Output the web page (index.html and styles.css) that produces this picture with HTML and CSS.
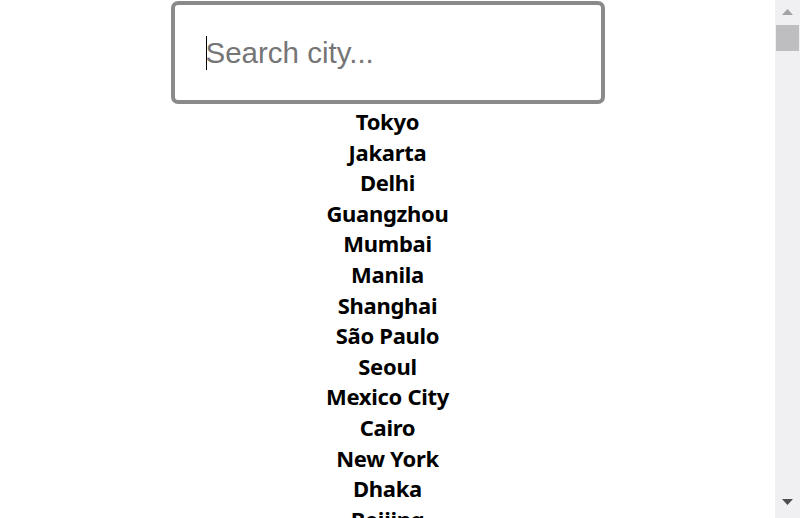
FILE: index.html
```html
<!DOCTYPE html>
<html lang="en">
<head>
<meta charset="utf-8">
<title>City search</title>
<link rel="stylesheet" href="styles.css">
</head>
<body>
<div class="window">
<main class="app">
  <label class="field">
    <input class="search" type="text" placeholder="Search city..." autofocus>
    <span class="caret"></span>
  </label>
  <ul class="cities">
    <li>Tokyo</li><li>Jakarta</li><li>Delhi</li><li>Guangzhou</li><li>Mumbai</li><li>Manila</li><li>Shanghai</li><li>São Paulo</li><li>Seoul</li><li>Mexico City</li><li>Cairo</li><li>New York</li><li>Dhaka</li><li>Beijing</li><li>Kolkata</li><li>Bangkok</li><li>Shenzhen</li><li>Moscow</li><li>Buenos Aires</li><li>Lagos</li><li>Istanbul</li><li>Karachi</li><li>Bangalore</li><li>Ho Chi Minh City</li><li>Osaka</li><li>Chengdu</li><li>Tehran</li><li>Kinshasa</li><li>Rio de Janeiro</li><li>Chennai</li><li>Xi'an</li><li>Lahore</li><li>Chongqing</li><li>Los Angeles</li><li>Baoding</li><li>London</li><li>Paris</li><li>Linyi</li><li>Dongguan</li><li>Hyderabad</li><li>Tianjin</li><li>Lima</li><li>Wuhan</li><li>Nanyang</li><li>Hangzhou</li><li>Foshan</li><li>Nagoya</li><li>Taipei</li><li>Tongshan</li><li>Luanda</li><li>Zhoukou</li><li>Ganzhou</li><li>Kuala Lumpur</li><li>Heze</li><li>Quanzhou</li><li>Chicago</li><li>Nanjing</li><li>Jining</li><li>Hanoi</li><li>Pune</li><li>Fuyang</li><li>Ahmedabad</li><li>Johannesburg</li><li>Bogotá</li><li>Dar es Salaam</li><li>Shenyang</li><li>Khartoum</li><li>Shangqiu</li><li>Cangzhou</li><li>Hong Kong</li><li>Shaoyang</li><li>Zhanjiang</li><li>Yancheng</li><li>Hengyang</li><li>Riyadh</li><li>Zhumadian</li><li>Santiago</li><li>Xingtai</li><li>Chattogram</li><li>Bijie</li><li>Shangrao</li><li>Zunyi</li><li>Surat</li><li>Surabaya</li><li>Huanggang</li><li>Maoming</li><li>Nanchong</li><li>Xinyang</li><li>Madrid</li><li>Baghdad</li><li>Qujing</li><li>Jieyang</li><li>Singapore</li><li>Prayagraj</li><li>Liaocheng</li><li>Dalian</li><li>Yulin</li><li>Changde</li><li>Qingdao</li><li>Douala</li><li>Miami</li><li>Nangandao</li><li>Pyongyang</li><li>Ankara</li><li>Toronto</li><li>Abidjan</li><li>Alexandria</li><li>Yangon</li><li>Saint Petersburg</li><li>Kano</li><li>Houston</li><li>Dallas</li><li>Philadelphia</li><li>Atlanta</li><li>Washington</li><li>Barcelona</li><li>Sydney</li><li>Melbourne</li><li>Guadalajara</li><li>Monterrey</li><li>Belo Horizonte</li><li>Casablanca</li><li>Nairobi</li><li>Addis Ababa</li><li>Accra</li><li>Kabul</li><li>Jeddah</li><li>Busan</li><li>Berlin</li><li>Rome</li><li>Milan</li><li>Athens</li><li>Lisbon</li><li>Kyiv</li><li>Warsaw</li><li>Vienna</li><li>Budapest</li><li>Bucharest</li><li>Hamburg</li><li>Munich</li><li>Prague</li><li>Brussels</li><li>Amsterdam</li><li>Stockholm</li><li>Copenhagen</li><li>Oslo</li><li>Helsinki</li><li>Dublin</li><li>Manchester</li><li>Birmingham</li><li>Glasgow</li><li>Lyon</li><li>Marseille</li><li>Naples</li><li>Turin</li><li>Valencia</li><li>Seville</li><li>Porto</li><li>Zurich</li><li>Geneva</li><li>Minsk</li><li>Belgrade</li><li>Sofia</li><li>Zagreb</li><li>Riga</li><li>Vilnius</li><li>Tallinn</li><li>Tbilisi</li><li>Baku</li><li>Yerevan</li><li>Tashkent</li><li>Almaty</li><li>Bishkek</li><li>Dushanbe</li><li>Ashgabat</li><li>Islamabad</li><li>Faisalabad</li><li>Rawalpindi</li><li>Multan</li><li>Peshawar</li><li>Jaipur</li><li>Lucknow</li><li>Kanpur</li><li>Nagpur</li><li>Indore</li><li>Bhopal</li><li>Patna</li><li>Vadodara</li><li>Ludhiana</li><li>Agra</li><li>Nashik</li><li>Varanasi</li><li>Colombo</li><li>Kathmandu</li><li>Thimphu</li><li>Mandalay</li><li>Phnom Penh</li><li>Vientiane</li><li>Cebu City</li><li>Davao City</li><li>Bandung</li><li>Medan</li><li>Semarang</li><li>Palembang</li><li>Makassar</li><li>Hai Phong</li><li>Da Nang</li><li>Kaohsiung</li><li>Taichung</li><li>Sapporo</li><li>Fukuoka</li><li>Kobe</li><li>Kyoto</li><li>Yokohama</li><li>Incheon</li><li>Daegu</li><li>Ulaanbaatar</li><li>Harbin</li><li>Changchun</li><li>Jinan</li><li>Zhengzhou</li><li>Changsha</li><li>Kunming</li><li>Nanning</li><li>Fuzhou</li><li>Xiamen</li><li>Hefei</li><li>Nanchang</li><li>Taiyuan</li><li>Shijiazhuang</li><li>Lanzhou</li><li>Urumqi</li><li>Guiyang</li><li>Suzhou</li><li>Wuxi</li><li>Ningbo</li><li>Wenzhou</li><li>Dubai</li><li>Abu Dhabi</li><li>Doha</li><li>Kuwait City</li><li>Muscat</li><li>Manama</li><li>Amman</li><li>Beirut</li><li>Damascus</li><li>Aleppo</li><li>Jerusalem</li><li>Tel Aviv</li><li>Mashhad</li><li>Isfahan</li><li>Tabriz</li><li>Shiraz</li><li>Basra</li><li>Mosul</li><li>Izmir</li><li>Bursa</li><li>Antalya</li><li>Tunis</li><li>Algiers</li><li>Tripoli</li><li>Rabat</li><li>Marrakesh</li><li>Dakar</li><li>Bamako</li><li>Abuja</li><li>Ibadan</li><li>Kumasi</li><li>Kampala</li><li>Kigali</li><li>Lusaka</li><li>Harare</li><li>Maputo</li><li>Durban</li><li>Cape Town</li><li>Pretoria</li><li>Antananarivo</li><li>Mogadishu</li><li>Montreal</li><li>Vancouver</li><li>Calgary</li><li>Ottawa</li><li>Boston</li><li>Seattle</li><li>San Francisco</li><li>San Diego</li><li>Phoenix</li><li>Denver</li><li>Detroit</li><li>Minneapolis</li><li>Havana</li><li>Santo Domingo</li><li>Guatemala City</li><li>San Salvador</li><li>Panama City</li><li>Caracas</li><li>Medellín</li><li>Cali</li><li>Quito</li><li>Guayaquil</li><li>La Paz</li><li>Asunción</li><li>Montevideo</li><li>Córdoba</li><li>Rosario</li><li>Salvador</li><li>Fortaleza</li><li>Brasília</li><li>Recife</li><li>Porto Alegre</li><li>Curitiba</li><li>Manaus</li><li>Auckland</li><li>Brisbane</li><li>Perth</li>
  </ul>
</main>
<div class="scrollbar" aria-hidden="true">
  <div class="sb-button">
    <svg width="11" height="6" viewBox="0 0 11 6"><polygon points="0,6 11,6 5.5,0" fill="#a3a3a6"/></svg>
  </div>
  <div class="sb-track">
    <div class="sb-thumb"></div>
  </div>
  <div class="sb-button sb-button-down">
    <svg width="11" height="6" viewBox="0 0 11 6"><polygon points="0,0 11,0 5.5,6" fill="#4f4f50"/></svg>
  </div>
</div>
</div>
</body>
</html>
```

FILE: styles.css
```css
html, body {
  margin: 0;
  padding: 0;
  height: 100%;
  overflow: hidden;
  background: #ffffff;
}

.window {
  display: flex;
  height: 100vh;
}

.app {
  flex: 1;
  min-width: 0;
  height: 100%;
  overflow: hidden;
  display: flex;
  flex-direction: column;
  align-items: center;
}

/* faux classic scrollbar */
.scrollbar {
  flex: none;
  width: 25px;
  height: 100%;
  display: flex;
  flex-direction: column;
  background: #f0eff1;
}

.sb-button {
  flex: none;
  height: 24px;
  display: flex;
  align-items: center;
  justify-content: center;
}

.sb-button-down {
  padding-bottom: 4px;
}

.sb-track {
  flex: 1;
  padding: 1px 1px 0;
}

.sb-thumb {
  height: 26px;
  background: #bebdbf;
}

.field {
  position: relative;
  display: block;
  flex: none;
  margin-top: 1px;
}

.search {
  box-sizing: border-box;
  display: block;
  width: 434px;
  height: 103px;
  margin: 0;
  padding: 0 0 0 31px;
  border: 4px solid #8a898c;
  border-radius: 7px;
  background: #ffffff;
  font-family: "Liberation Sans", Arial, sans-serif;
  font-size: 29.5px;
  color: #222;
  outline: none;
  caret-color: transparent;
}

.search::placeholder {
  color: #757575;
}

.caret {
  position: absolute;
  left: 35px;
  top: 35px;
  width: 1px;
  height: 34px;
  background: #000;
  pointer-events: none;
}

.cities {
  list-style: none;
  margin: 0;
  padding: 2px 0 0;
  text-align: center;
  font-family: "Noto Sans", "Open Sans", sans-serif;
  font-weight: 700;
  font-size: 22px;
  letter-spacing: -0.3px;
  line-height: 30.6px;
  color: #000;
}
```
